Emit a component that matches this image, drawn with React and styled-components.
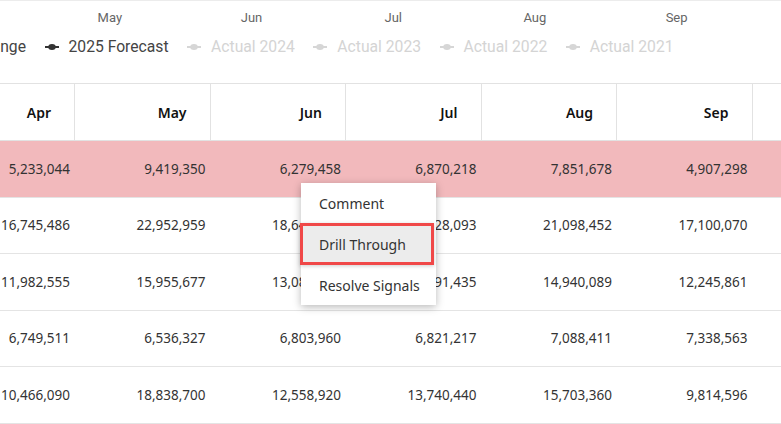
import React from 'react'
import styled, { createGlobalStyle } from 'styled-components'

const GlobalStyle = createGlobalStyle`
  html, body {
    margin: 0;
    padding: 0;
    background: #fff;
    overflow: hidden;
  }
  * { box-sizing: border-box; }
`

const months = ['Apr', 'May', 'Jun', 'Jul', 'Aug', 'Sep', 'Oct']

const rows = [
  { alert: true, values: ['5,233,044', '9,419,350', '6,279,458', '6,870,218', '7,851,678', '4,907,298', '5,118,402'] },
  { values: ['16,745,486', '22,952,959', '18,647,210', '19,328,093', '21,098,452', '17,100,070', '16,220,514'] },
  { values: ['11,982,555', '15,955,677', '13,086,412', '13,891,435', '14,940,089', '12,245,861', '11,804,337'] },
  { values: ['6,749,511', '6,536,327', '6,803,960', '6,821,217', '7,088,411', '7,338,563', '7,012,908'] },
  { values: ['10,466,090', '18,838,700', '12,558,920', '13,740,440', '15,703,360', '9,814,596', '10,902,118'] },
]

const legend = [
  { label: 'Range', active: true },
  { label: '2025 Forecast', active: true },
  { label: 'Actual 2024' },
  { label: 'Actual 2023' },
  { label: 'Actual 2022' },
  { label: 'Actual 2021' },
]

function LegendMarker({ color }) {
  return (
    <svg width="14" height="10" viewBox="0 0 14 10">
      <line x1="0" y1="5" x2="14" y2="5" stroke={color} strokeWidth="2" />
      <ellipse cx="7" cy="5" rx="3.8" ry="3" fill={color} />
    </svg>
  )
}

function App() {
  return (
    <Page>
      <GlobalStyle />
      <ChartArea>
        <AxisRow>
          {months.slice(1, 6).map((m) => (
            <AxisLabel key={m}>{m}</AxisLabel>
          ))}
        </AxisRow>
        <LegendRow>
          {legend.map((l) => (
            <LegendItem key={l.label} $active={l.active}>
              <LegendMarker color={l.active ? '#333' : '#d6d6d6'} />
              <span>{l.label}</span>
            </LegendItem>
          ))}
        </LegendRow>
      </ChartArea>

      <Grid>
        {months.map((m) => (
          <HeaderCell key={m}>{m === 'Oct' ? '' : m}</HeaderCell>
        ))}
        {rows.map((r, i) =>
          r.values.map((v, j) => (
            <Cell key={i + '-' + j} $alert={r.alert}>{j === 6 ? '' : v}</Cell>
          ))
        )}
      </Grid>

      <Menu>
        <MenuItem>Comment</MenuItem>
        <MenuItem $selected>Drill Through</MenuItem>
        <MenuItem>Resolve Signals</MenuItem>
      </Menu>
    </Page>
  )
}

export default App

const Page = styled.div`
    position: relative;
    width: 781px;
    height: 424px;
    overflow: hidden;
    background: #fff;
`

const ChartArea = styled.div`
    height: 83px;
    border-top: 1px solid #ececec;
    font-family: Roboto, "Liberation Sans", sans-serif;
`

const AxisRow = styled.div`
    display: flex;
    padding-left: 39px;
    padding-top: 8px;
    height: 21px;
`

const AxisLabel = styled.div`
    width: 141.7px;
    text-align: center;
    font-size: 13px;
    line-height: 18px;
    color: #666;
`

const LegendRow = styled.div`
    display: flex;
    align-items: center;
    gap: 18.5px;
    margin-left: -42px;
    margin-top: 14px;
    white-space: nowrap;
`

const LegendItem = styled.div`
    display: flex;
    align-items: center;
    gap: 10px;
    font-size: 15.7px;
    line-height: 22px;
    color: ${(p) => (p.$active ? '#444' : '#d4d4d4')};

    svg {
        flex: none;
    }
`

const Grid = styled.div`
    display: grid;
    grid-template-columns: repeat(7, 135.5px);
    grid-auto-rows: 56.5px;
    grid-template-rows: 57px;
    margin-left: -60.5px;
    border-top: 1px solid #e2e2e2;
    font-family: "Noto Sans", "Open Sans", sans-serif;
`

const HeaderCell = styled.div`
    display: flex;
    align-items: center;
    justify-content: flex-end;
    padding-right: 23px;
    border-right: 1px solid #e2e2e2;
    border-bottom: 1px solid #e2e2e2;
    font-size: 14px;
    font-weight: 600;
    color: #111;
`

const Cell = styled.div`
    display: flex;
    align-items: center;
    justify-content: flex-end;
    padding-right: 5px;
    border-bottom: 1px solid #e4e4e4;
    font-size: 13.5px;
    color: #333;
    background: ${(p) => (p.$alert ? '#f2b9bc' : '#fff')};
`

const Menu = styled.div`
    position: absolute;
    left: 301px;
    top: 183px;
    width: 135px;
    background: #fff;
    box-shadow: 0 2px 8px rgba(0, 0, 0, 0.28);
    font-family: "Noto Sans", "Open Sans", sans-serif;
`

const MenuItem = styled.div`
    height: ${(p) => (p.$selected ? '42px' : '40px')};
    display: flex;
    align-items: center;
    padding-left: ${(p) => (p.$selected ? '16px' : '18px')};
    margin-left: ${(p) => (p.$selected ? '-1px' : '0')};
    margin-right: ${(p) => (p.$selected ? '2px' : '0')};
    font-size: 14px;
    color: #333;
    background: ${(p) => (p.$selected ? '#ececec' : 'transparent')};
    border: ${(p) => (p.$selected ? '3px solid #f04848' : 'none')};
    box-shadow: ${(p) => (p.$selected ? '0 1px 4px rgba(0,0,0,0.2)' : 'none')};
`
